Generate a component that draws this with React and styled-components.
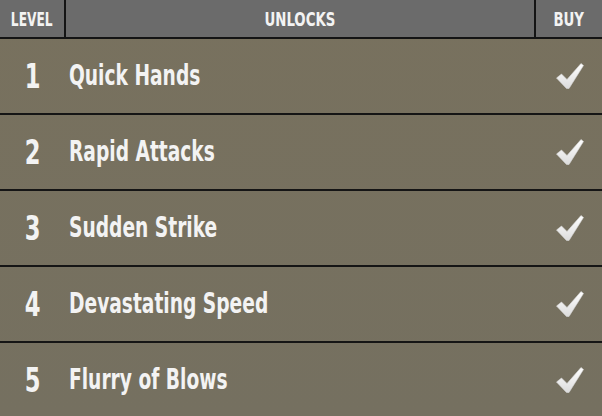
import React from 'react';
import styled, { createGlobalStyle } from 'styled-components';

const GlobalStyle = createGlobalStyle`
  html, body {
    margin: 0;
    padding: 0;
    background: #777060;
  }
  body {
    font-family: "DejaVu Sans Condensed", "DejaVu Sans", sans-serif;
  }
`;

const Board = styled.div`
  width: 602px;
  height: 416px;
  overflow: hidden;
  background: linear-gradient(180deg, #78715e 0%, #757060 100%);
`;

const Header = styled.div`
  display: grid;
  grid-template-columns: 66px 1fr 66px;
  height: 37px;
  background: #6b6b6b;
  border-bottom: 2px solid #141414;
`;

const HeadCell = styled.div`
  display: flex;
  align-items: center;
  justify-content: center;
  border-right: ${({ last }) => (last ? 'none' : '2px solid #141414')};
`;

const Squeeze = styled.span`
  display: inline-block;
  font-weight: bold;
  color: #f3f3f3;
  font-size: ${({ size }) => size}px;
  line-height: 1;
  transform: scaleX(${({ squeeze }) => squeeze || 0.74});
  transform-origin: ${({ origin }) => origin || 'center'};
  white-space: nowrap;
`;

const Row = styled.div`
  display: grid;
  grid-template-columns: 66px 1fr 66px;
  align-items: center;
  height: 74px;
  border-bottom: 2px solid #151515;
`;

const Level = styled.div`
  display: flex;
  justify-content: center;
`;

const Title = styled.div`
  padding-left: 3px;
`;

const Buy = styled.div`
  display: flex;
  justify-content: center;
  padding-left: 2px;
`;

const Check = () => (
  <svg width="28" height="26" viewBox="0 0 28 26">
    <defs>
      <linearGradient id="chk" x1="0" y1="0" x2="0" y2="1">
        <stop offset="0" stopColor="#ffffff" />
        <stop offset="1" stopColor="#dcdcdc" />
      </linearGradient>
    </defs>
    <path
      d="M0.5 15 L5.5 11 L11 16.5 L25 0.5 L27.5 2.5 L13 25.5 L10.5 25.5 Z"
      fill="url(#chk)"
      stroke="#d8d8d8"
      strokeWidth="0.6"
      strokeLinejoin="round"
    />
  </svg>
);

const unlocks = ['Quick Hands', 'Rapid Attacks', 'Sudden Strike', 'Devastating Speed', 'Flurry of Blows'];

export default function App() {
  return (
    <Board>
      <GlobalStyle />
      <Header>
        <HeadCell><Squeeze size={20} squeeze={0.68}>LEVEL</Squeeze></HeadCell>
        <HeadCell><Squeeze size={20}>UNLOCKS</Squeeze></HeadCell>
        <HeadCell last><Squeeze size={20}>BUY</Squeeze></HeadCell>
      </Header>
      {unlocks.map((name, i) => (
        <Row key={name}>
          <Level><Squeeze size={34}>{i + 1}</Squeeze></Level>
          <Title><Squeeze size={28} squeeze={0.74} origin="left">{name}</Squeeze></Title>
          <Buy><Check /></Buy>
        </Row>
      ))}
    </Board>
  );
}
